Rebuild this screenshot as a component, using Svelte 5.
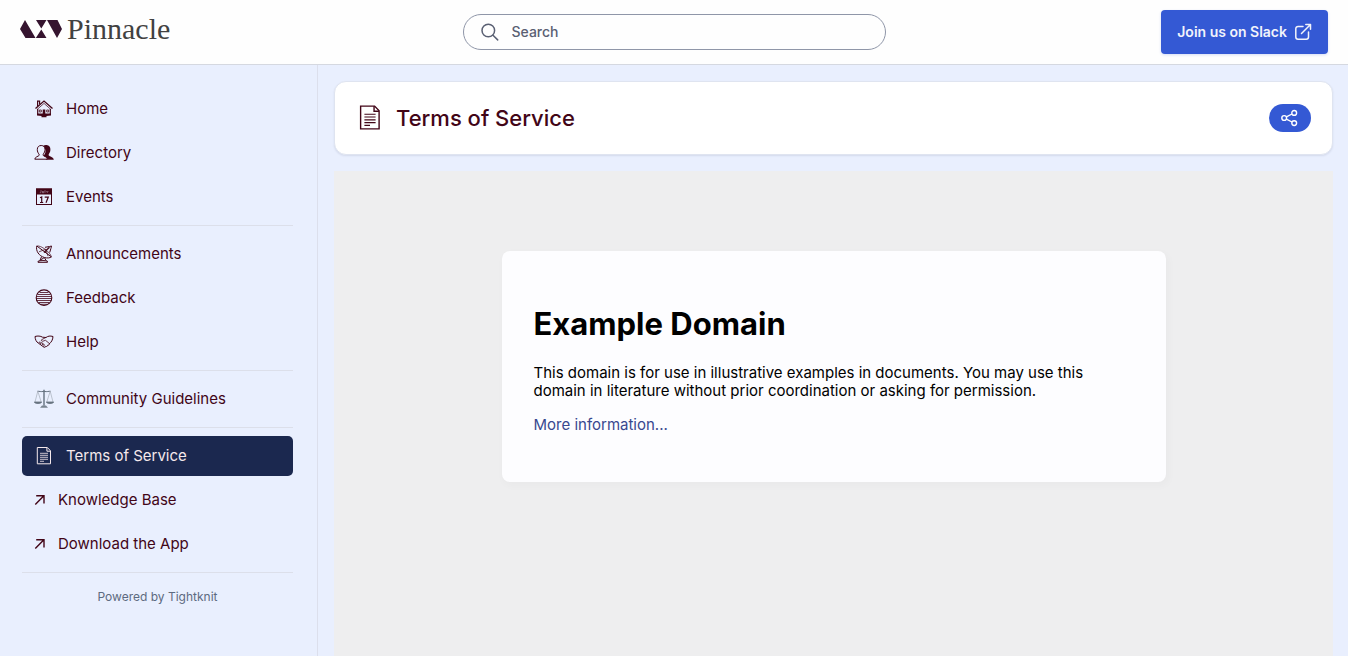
<script>
  const groups = [
    [
      { label: 'Home', icon: 'home' },
      { label: 'Directory', icon: 'people' },
      { label: 'Events', icon: 'calendar' }
    ],
    [
      { label: 'Announcements', icon: 'satellite' },
      { label: 'Feedback', icon: 'globe' },
      { label: 'Help', icon: 'handshake' }
    ],
    [{ label: 'Community Guidelines', icon: 'scales' }],
    [
      { label: 'Terms of Service', icon: 'page', active: true },
      { label: 'Knowledge Base', icon: 'arrow', external: true },
      { label: 'Download the App', icon: 'arrow', external: true }
    ]
  ];
</script>

{#snippet glyph(name)}
  {#if name === 'home'}
    <svg class="icon" viewBox="0 0 20 20" fill="none" stroke="currentColor" stroke-width="1.2" aria-hidden="true">
      <path d="M1.500 9.500 10 2l8.500 7.500" stroke-width="1.300" />
      <path d="M3 10.600 10 4.400l7 6.200" stroke-width=".7" />
      <path d="M3.600 7V2.200h2v3" />
      <path d="M3.700 10v5M16.300 10v5" />
      <path d="M3 14.500h14v2l-4.500.5v1.300H7.500V17L3 16.500z" fill="currentColor" stroke="none" />
      <path d="M8.700 10.500h2.600V17H8.700z" fill="currentColor" stroke="none" />
      <path d="M5.300 11h2v2h-2zM12.700 11h2v2h-2z" stroke-width=".8" />
    </svg>
  {:else if name === 'people'}
    <svg class="icon" viewBox="0 0 20 20" aria-hidden="true">
      <path d="M9 3.200c1-1 2.400-1.300 3.600-1.100 2.600.2 4 2.200 3.800 4.700-.1 2-.8 3.500-1.700 4.400v1.300c1 .9 4.800 1.500 5.100 4.200H12c-.3-1.500-1.500-2.400-3-2.900l1.600-2.500c1.200-1.800 1.700-5.500-1.600-8.100z" fill="currentColor" />
      <path d="M.8 16.200c.2-2.500 3.600-2.700 4.300-3.800v-1.200C4 10 3.300 8.500 3.300 6.500 3.300 4 4.800 2.500 7.200 2.500S11 4 11 6.400c0 2-.7 3.500-1.800 4.700v1.300c.8 1.100 4 1.300 4.300 3.800z" fill="#e9effe" stroke="currentColor" stroke-width="1" />
    </svg>
  {:else if name === 'calendar'}
    <svg class="icon" viewBox="0 0 20 20" aria-hidden="true">
      <rect x="2.500" y="2" width="15" height="15.500" fill="none" stroke="currentColor" />
      <path d="M2 1.500h16v6H2z" fill="currentColor" />
      <path d="M7 3.200v2q0 .8-1.200.5M8.500 4v1.800h1.200V4M11 3.200v2.600M12.500 4l.8 1.500.9-1.500" fill="none" stroke="#c9b9cb" stroke-width=".5" />
      <path d="m6 10.800 1.700-.9v5.600M6 15.500h3.200M10.700 10.100h3.600l-2.300 5.600" fill="none" stroke="currentColor" stroke-width="1.200" />
    </svg>
  {:else if name === 'satellite'}
    <svg class="icon" viewBox="0 0 20 20" fill="none" stroke="currentColor" stroke-width="1" aria-hidden="true">
      <path d="M2.800 2c-1.300 4.800 2.200 10 7.600 11.500 2.800.8 5.500.5 7-.6z" />
      <path d="M2.800 2c4-1 13.600 6.300 14.600 10.900M5 7.800l6.800-2.600 2.200 7" stroke-width=".7" />
      <path d="m10 8.500 5.500-5.300" stroke-width="1.300" />
      <path d="M11 3.300 15.500 2.500l2-.5-.6 2.500-1.200 4" />
      <path d="m7.500 12.800-1.700 4M10.300 13.500l2 3.300M6.300 16l3.500-2M4 17.300c2-1 8-1 9.500 0v1H4z" />
    </svg>
  {:else if name === 'globe'}
    <svg class="icon" viewBox="0 0 20 20" fill="none" stroke="currentColor" aria-hidden="true">
      <circle cx="10" cy="9.700" r="7.800" stroke-width="1.100" />
      <path d="M5.500 4.500h9M3.500 6.500h13M2.500 8.500h15M2.200 10.500h15.600M2.700 12.500h14.600M4.500 14.500h11M7 16.300h6" stroke-width=".8" />
    </svg>
  {:else if name === 'handshake'}
    <svg class="icon" viewBox="0 0 20 20" fill="none" stroke="currentColor" stroke-width="1" stroke-linejoin="round" aria-hidden="true">
      <path d="M1 4.500c.2 3 1.300 5.500 3.300 6.500l5.400 4c1 .7 2 .2 2-.7 1 .5 2-.1 1.900-1 1 .2 1.700-.5 1.500-1.400 2.200-1.500 3.700-4 3.900-7.400-2.800-.9-5.300-.4-7 1L8.500 5.200C6.500 3.900 3.700 3.700 1 4.500z" />
      <path d="M11.800 5.500 7.600 7.700c-.6.800.2 1.800 1.300 1.500l2.600-.9 4 3.300M4.500 11l1.600-1.200 1 1-1 1.400M7.100 10.800l1.500.2.300 1-1.200 1.400M8.900 12l1.400.6-.6 2.200" stroke-width=".8" />
    </svg>
  {:else if name === 'scales'}
    <svg class="icon" viewBox="0 0 20 20" fill="none" stroke="#64717f" stroke-width=".8" aria-hidden="true">
      <path d="M10 .8v16" stroke-width="1.400" />
      <path d="M3.500 2.200c2 0 3 .8 6.500.2 3.500.6 4.500-.2 6.500-.2" stroke-width="1" />
      <path d="M3.800 2.200 1 13M3.800 2.200 7.200 13M16.200 2.200 12.800 13M16.200 2.200 19 13" stroke="#9aa3ad" stroke-width=".6" />
      <path d="M.3 13h7.400c-.8 2-6.600 2-7.400 0zM12.300 13h7.400c-.8 2-6.600 2-7.400 0z" fill="#697681" />
      <path d="M8 16.500h4l2 2.200H6z" fill="#788490" stroke="none" />
    </svg>
  {:else if name === 'page'}
    <svg class="icon" viewBox="0 0 20 20" fill="none" stroke="currentColor" aria-hidden="true">
      <path d="M3.300 1.500h10l3.200 3.300v13H3.300z" stroke-width="1" />
      <path d="M12.900 1.600v3.600h3.500" />
      <path d="M6 7.300h8M6 9.300h8M6 11.300h8M6 13.300h8M6 15.300h4" stroke-width=".8" />
    </svg>
  {:else}
    <svg class="arrow" viewBox="0 0 12 12" fill="none" stroke="currentColor" stroke-width="1.400" aria-hidden="true">
      <path d="M1.300 10.500 9.900 1.800M2.200 1.700H10v7.800" />
    </svg>
  {/if}
{/snippet}

<div class="app">
  <header>
    <a class="brand" href="#home">
      <svg viewBox="0 0 42 18" aria-hidden="true">
        <path fill="#35142f" d="M5 0 15.500 18H5.500L0 9zM16 0h10.500L21.300 8.500zM21.300 9.500 26.500 18H15.800zM27 0h10.500L42 9l-5 9z" />
      </svg>
      <span>Pinnacle</span>
    </a>
    <label class="search">
      <svg viewBox="0 0 20 20" fill="none" stroke="currentColor" stroke-width="1.500" stroke-linecap="round" aria-hidden="true">
        <circle cx="8.300" cy="8.500" r="6.300" />
        <path d="m13 13.200 4.700 4.700" />
      </svg>
      <input type="search" placeholder="Search" aria-label="Search" />
    </label>
    <div class="actions">
      <a class="join" href="#slack">
        Join us on Slack
        <svg viewBox="0 0 18 18" fill="none" stroke="currentColor" stroke-width="1.500" stroke-linecap="round" stroke-linejoin="round" aria-hidden="true">
          <path d="M9 3.500H4A2.200 2.200 0 0 0 1.800 5.700V14A2.200 2.200 0 0 0 4 16.200h8.300a2.200 2.200 0 0 0 2.200-2.200V9M7.500 10.500l9-9M11.800 1.500h4.700v4.700" />
        </svg>
      </a>
    </div>
  </header>

  <div class="body">
    <aside>
      <nav aria-label="Main">
        {#each groups as group}
          <ul>
            {#each group as item}
              <li>
                <a
                  href="#{item.label}"
                  class:active={item.active}
                  aria-current={item.active ? 'page' : undefined}
                >
                  {@render glyph(item.icon)}
                  <span>{item.label}</span>
                </a>
              </li>
            {/each}
          </ul>
        {/each}
      </nav>
      <a class="powered" href="#tightknit">Powered by Tightknit</a>
    </aside>

    <main>
      <section class="title">
        {@render glyph('page')}
        <h1>Terms of Service</h1>
        <button type="button" aria-label="Share">
          <svg viewBox="0 0 18 18" fill="none" stroke="currentColor" stroke-width="1.400" aria-hidden="true">
            <circle cx="3.200" cy="9" r="2.400" />
            <circle cx="13.200" cy="3.900" r="2.400" />
            <circle cx="13.200" cy="14.100" r="2.400" />
            <path d="m5.400 7.900 5.600-2.900M5.400 10.100l5.600 2.900" />
          </svg>
        </button>
      </section>

      <section class="frame">
        <article>
          <h2>Example Domain</h2>
          <p>
            This domain is for use in illustrative examples in documents. You may use this domain in
            literature without prior coordination or asking for permission.
          </p>
          <p><a href="#more">More information...</a></p>
        </article>
      </section>
    </main>
  </div>
</div>

<style>
  :global(body) {
    margin: 0;
  }

  .app {
    display: flex;
    flex-direction: column;
    min-height: 100vh;
    background: #e9effe;
    color: #420517;
    font-family: Inter, 'Liberation Sans', sans-serif;
    font-size: 15px;
    line-height: 24px;
  }

  .app *,
  .app {
    box-sizing: border-box;
  }

  a {
    color: inherit;
    text-decoration: none;
  }

  header {
    display: grid;
    grid-template-columns: 1fr minmax(200px, 423px) 1fr;
    align-items: center;
    height: 65px;
    padding: 0 20px;
    background: #fefefe;
    border-bottom: 1px solid #d5d8e0;
  }

  .brand {
    display: flex;
    align-items: center;
    gap: 5px;
    padding-bottom: 6px;
    color: #414141;
    font-family: 'Liberation Serif', serif;
    font-size: 30px;
    line-height: 32px;
  }

  .brand svg {
    width: 42px;
    height: 18px;
  }

  .search {
    display: flex;
    align-items: center;
    gap: 12px;
    height: 36px;
    padding: 0 16px;
    border: 1px solid #8f96a8;
    border-radius: 18px;
    color: #5a6073;
  }

  .search svg {
    flex: none;
    width: 20px;
    height: 20px;
  }

  .search input {
    flex: 1;
    min-width: 0;
    padding: 0;
    border: 0;
    outline: 0;
    background: none;
    color: inherit;
    font: 500 14px/20px Inter, sans-serif;
  }

  .search input::placeholder {
    color: #5a6073;
    opacity: 1;
  }

  .actions {
    display: flex;
    justify-content: flex-end;
  }

  .join {
    display: flex;
    align-items: center;
    gap: 7px;
    height: 44px;
    padding: 0 16px;
    border-radius: 4px;
    background: #3459d4;
    color: #f1f3fb;
    box-shadow: 0 1px 3px #3459d433;
    font-size: 14px;
    font-weight: 600;
  }

  .join svg {
    width: 18px;
    height: 18px;
  }

  .body {
    display: flex;
    flex: 1;
  }

  aside {
    flex: none;
    width: 318px;
    padding: 24px 24px 24px 22px;
    border-right: 1px solid #dcdfec;
  }

  ul {
    display: flex;
    flex-direction: column;
    gap: 4px;
    margin: 0 0 8px;
    padding: 0 0 8px;
    border-bottom: 1px solid #dcdfea;
    list-style: none;
  }

  li a {
    display: flex;
    align-items: center;
    gap: 12px;
    height: 40px;
    padding: 0 12px;
    border-radius: 5px;
  }

  li a.active {
    background: #1b284f;
    color: #f5e9ec;
  }

  .icon {
    flex: none;
    width: 20px;
    height: 20px;
  }

  .arrow {
    flex: none;
    width: 12px;
    height: 12px;
  }

  .powered {
    display: block;
    color: #5d6a80;
    font-size: 12px;
    line-height: 32px;
    text-align: center;
  }

  main {
    display: flex;
    flex: 1;
    flex-direction: column;
    gap: 16px;
    min-width: 0;
    padding: 16px 15px 0 16px;
  }

  .title {
    display: flex;
    align-items: center;
    gap: 12px;
    height: 74px;
    padding: 0 21px;
    border: 1px solid #dfe4f0;
    border-radius: 12px;
    background: #fff;
    box-shadow: 0 1px 2px #1b284f1a;
  }

  .title .icon {
    width: 28px;
    height: 28px;
  }

  h1 {
    flex: 1;
    margin: 0;
    font-size: 22px;
    font-weight: 500;
    line-height: 32px;
  }

  button {
    display: grid;
    place-items: center;
    width: 42px;
    height: 28px;
    padding: 0;
    border: 0;
    border-radius: 14px;
    background: #3459d4;
    color: #fff;
  }

  button svg {
    width: 18px;
    height: 18px;
  }

  .frame {
    flex: 1;
    padding: 80px 16px;
    background: #eeeeef;
    color: #000;
    line-height: 18px;
  }

  article {
    max-width: 664px;
    margin: 0 auto;
    padding: 54px 32px 48px;
    border-radius: 8px;
    background: #fdfdff;
    box-shadow: 2px 3px 7px 2px #00000005;
  }

  h2 {
    margin: 0 0 21px;
    font-size: 31px;
    line-height: 38px;
  }

  p {
    margin: 0 0 16px;
  }

  p:last-child {
    margin: 0;
  }

  article a {
    color: #38488f;
  }
</style>
